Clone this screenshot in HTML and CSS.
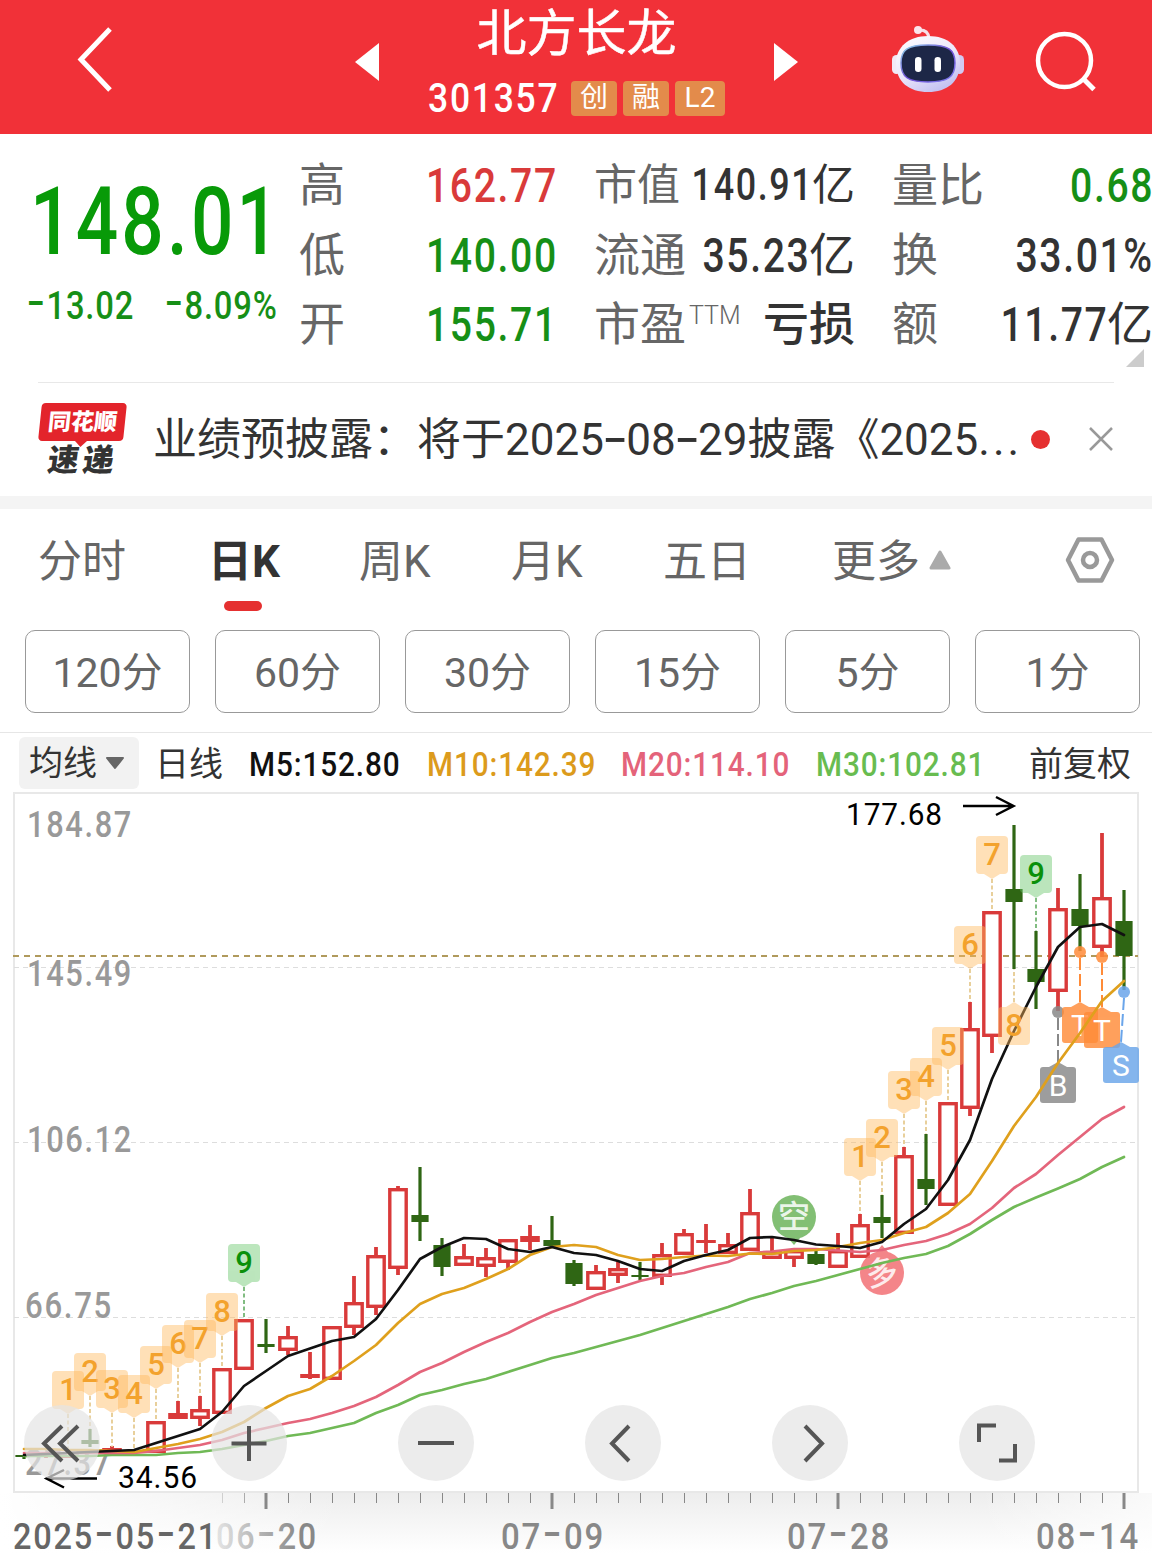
FILE: index.html
```html
<!DOCTYPE html>
<html lang="zh-CN">
<head>
<meta charset="utf-8">
<title>北方长龙 301357</title>
<link rel="stylesheet" href="styles.css">
</head>
<body>
<header class="topbar">
  <svg class="back" width="50" height="80" viewBox="70 20 50 80"><path d="M110 29 81 59.500 110 90" fill="none" stroke="#fff" stroke-width="5"/></svg>
  <svg class="prev" width="24" height="38" viewBox="0 0 24 38"><path d="M24 0V38L0 19Z" fill="#fff"/></svg>
  <div class="stock">
    <h1 class="name">北方长龙</h1>
    <div class="code-row"><span class="code">301357</span><span class="tag">创</span><span class="tag">融</span><span class="tag wide">L2</span></div>
  </div>
  <svg class="next" width="24" height="38" viewBox="0 0 24 38"><path d="M0 0V38L24 19Z" fill="#fff"/></svg>
  <svg class="robot" width="76" height="72" viewBox="890 24 76 72">
    <defs>
      <linearGradient id="shell" x1="0" y1="0" x2=".6" y2="1"><stop offset="0" stop-color="#fff"/><stop offset=".6" stop-color="#ebe6fa"/><stop offset="1" stop-color="#c5c2f2"/></linearGradient>
      <linearGradient id="rim" x1="0" y1="0" x2="1" y2="1"><stop offset="0" stop-color="#8fd7e8"/><stop offset=".5" stop-color="#7350d8"/><stop offset="1" stop-color="#7d7df0"/></linearGradient>
    </defs>
    <path d="M918 30Q928 29 929 38" fill="none" stroke="#f6dfe8" stroke-width="3"/>
    <circle cx="918" cy="30" r="4" fill="#fbe5ec"/>
    <rect x="892" y="55" width="9" height="19" rx="4.500" fill="#f2e9f6"/>
    <rect x="955" y="55" width="9" height="19" rx="4.500" fill="#d2c9f2"/>
    <path d="M928 36C948 36 960 47 960 63C960 82 947 92 928 92C909 92 896 82 896 63C896 47 909 36 928 36Z" fill="url(#shell)"/>
    <path d="M928 45C949 45 955 50 955 63C955 77 948 82 928 82C908 82 901 77 901 63C901 50 907 45 928 45Z" fill="#1d2747" stroke="url(#rim)" stroke-width="1.500"/>
    <rect x="915" y="57" width="6.500" height="15" rx="3.200" fill="#fff"/><rect x="934.500" y="57" width="6.500" height="15" rx="3.200" fill="#fff"/>
  </svg>
  <svg class="search" width="64" height="64" viewBox="1034 30 64 64"><circle cx="1064.500" cy="60.500" r="26.500" fill="none" stroke="#fff" stroke-width="4.500"/><path d="M1083.500 79 1094 89.500" stroke="#fff" stroke-width="5"/></svg>
</header>

<section class="quote">
  <div class="last">
    <div class="price">148.01</div>
    <div class="change"><span class="num"><i class="dash">-</i>13.02</span><span class="num"><i class="dash">-</i>8.09%</span></div>
  </div>
  <div class="stats">
    <div class="stat"><span class="label">高</span><span class="value up"><b>162.77</b></span></div>
    <div class="stat"><span class="label small">市值</span><span class="value small"><b>140.91</b>亿</span></div>
    <div class="stat"><span class="label">量比</span><span class="value down"><b>0.68</b></span></div>
    <div class="stat"><span class="label">低</span><span class="value down"><b>140.00</b></span></div>
    <div class="stat"><span class="label">流通</span><span class="value"><b>35.23</b>亿</span></div>
    <div class="stat"><span class="label">换</span><span class="value"><b>33.01%</b></span></div>
    <div class="stat"><span class="label">开</span><span class="value down"><b>155.71</b></span></div>
    <div class="stat"><span class="label">市盈<sup>TTM</sup></span><span class="value cjk">亏损</span></div>
    <div class="stat"><span class="label">额</span><span class="value"><b>11.77</b>亿</span></div>
  </div>
  <svg class="corner" width="18" height="18"><path d="M18 0V18H0Z" fill="#ccc"/></svg>
</section>

<section class="news">
  <div class="logo">
    <div class="logo-top"><span>同花顺</span></div>
    <div class="logo-bottom">速递</div>
  </div>
  <p class="headline">业绩预披露：将于2025<i class="dash">-</i>08<i class="dash">-</i>29披露《2025<span class="dots">...</span></p>
  <span class="dot"></span>
  <svg class="close" width="26" height="26" viewBox="0 0 26 26"><path d="M2 2 24 24M24 2 2 24" stroke="#999" stroke-width="2.500"/></svg>
</section>

<nav class="tabs">
  <span class="tab t1">分时</span><span class="tab t2 active">日K</span><span class="tab t3">周K</span><span class="tab t4">月K</span><span class="tab t5">五日</span><span class="tab t6">更多<svg width="22" height="20" viewBox="0 0 22 20"><path d="M11 2 20 18H2Z" fill="#aaa" stroke="#aaa" stroke-width="3" stroke-linejoin="round"/></svg></span>
  <svg class="settings" width="50" height="48" viewBox="1065 536 50 48"><path d="M1078.500 539.500H1101.500L1112 560 1101.500 580.500H1078.500L1068 560Z" fill="none" stroke="#999" stroke-width="4.500" stroke-linejoin="round"/><circle cx="1090" cy="560" r="7" fill="none" stroke="#999" stroke-width="4.500"/></svg>
</nav>
<div class="periods"><button>120分</button><button>60分</button><button>30分</button><button>15分</button><button>5分</button><button>1分</button></div>

<div class="legend">
  <span class="picker">均线<svg width="20" height="14" viewBox="0 0 20 14"><path d="M2 2H18L10 12Z" fill="#666" stroke="#666" stroke-width="2" stroke-linejoin="round"/></svg></span>
  <span class="cycle">日线</span>
  <span class="ma m5">M5:152.80</span><span class="ma m10">M10:142.39</span><span class="ma m20">M20:114.10</span><span class="ma m30">M30:102.81</span>
  <span class="adjust">前复权</span>
</div>

<main class="chart">
  <svg id="plot" width="1152" height="763" viewBox="0 790 1152 763"></svg>
  <div class="controls">
    <button><svg viewBox="0 0 76 76"><path d="M38 21 20 38.500 38 56M54 21 36 38.500 54 56"/></svg></button>
    <button><svg viewBox="0 0 76 76"><path d="M38 21V56M20.500 38.500H55.500"/></svg></button>
    <button><svg viewBox="0 0 76 76"><path d="M20 38H56"/></svg></button>
    <button><svg viewBox="0 0 76 76"><path d="M44 21 27 38.500 44 56"/></svg></button>
    <button><svg viewBox="0 0 76 76"><path d="M33 21 50 38.500 33 56"/></svg></button>
    <button><svg viewBox="0 0 76 76"><path d="M20 37V20.500H37M56 39V55.500H40"/></svg></button>
  </div>
</main>
<script src="chart.js"></script>
</body>
</html>
```
FILE: styles.css
```css
* { box-sizing: border-box; }
body { margin: 0; width: 1152px; height: 1553px; overflow: hidden; background: #fff; color: #333; font-family: Roboto, "Noto Sans CJK SC", sans-serif; white-space: nowrap; }
svg { display: block; flex: none; }
button { font: inherit; color: inherit; padding: 0; }
.dash { font-family: Inter, sans-serif; font-style: normal; font-weight: 400; font-size: 1.3em; line-height: 0; }

.topbar { height: 134px; background: #f13138; color: #fff; display: flex; align-items: flex-start; }
.back { margin: 20px 0 0 70px; }
.prev { margin: 43px 0 0 235px; }
.stock { width: 395px; display: flex; flex-direction: column; align-items: center; }
.name { margin: 0; font-size: 50px; line-height: 69px; font-weight: 400; -webkit-text-stroke: .5px #fff; height: 74px; }
.code-row { display: flex; align-items: center; gap: 6px; height: 48px; width: 297px; }
.code { width: 137px; font-size: 41px; font-weight: 500; letter-spacing: 2px; transform: scaleX(.865); transform-origin: left; }
.tag { width: 46px; height: 35px; border-radius: 4px; background: #e38b4b; font-size: 28px; line-height: 34px; text-align: center; }
.tag.wide { width: 50px; }
.next { margin-top: 43px; }
.robot { margin: 24px 0 0 92px; }
.search { margin: 30px 0 0 68px; }

.quote { position: relative; height: 248px; display: flex; }
.last { width: 300px; color: #089a08; }
.price { margin: 34px 0 0 30px; height: 108px; font-size: 94px; line-height: 108px; font-weight: 500; letter-spacing: 4px; transform: scaleX(.795); transform-origin: left; }
.change { display: flex; justify-content: space-between; padding: 7px 16px 0 26px; font-size: 39px; line-height: 46px; font-weight: 500; color: #168f16; }
.change .num { width: 110px; letter-spacing: 1px; transform: scaleX(.84); transform-origin: left; }
.change .num + .num { width: 120px; }
.stats { padding-top: 17px; display: grid; grid-template-columns: 255px 258px 258px; column-gap: 40px; grid-auto-rows: 69.500px; }
.stat { display: flex; align-items: center; }
.label { width: 46px; margin-left: -1px; font-size: 46px; line-height: 69px; color: #666; font-weight: 400; }
.label.small { font-size: 43px; }
.label sup { margin-left: 3px; font-size: 25px; font-weight: 300; line-height: 0; vertical-align: 16px; }
.value { flex: 1; min-width: 0; display: flex; justify-content: flex-end; margin-right: -2px; font-size: 46px; line-height: 69px; }
.value b { font-size: 48px; font-weight: 500; letter-spacing: 2px; transform: translateX(1px) scaleX(.815); transform-origin: right; }
.value.small { font-size: 43px; }
.value.small b { font-size: 44px; }
.value.cjk { font-weight: 500; }
.up { color: #d93a3a; }
.down { color: #168f16; }
.corner { position: absolute; right: 8px; bottom: 15px; }

.news { height: 127px; margin: 0; padding: 0 38px; display: flex; align-items: center; border-bottom: 13px solid #f4f4f4; position: relative; }
.news::before { content: ""; position: absolute; left: 38px; right: 38px; top: 0; height: 1px; background: #e8e8e8; }
.logo { width: 115px; height: 73px; }
.logo-top { width: 85px; height: 38px; margin-left: 2px; background: #e3242b; border-radius: 4px; transform: skewX(-6deg); color: #fff; font-size: 23px; line-height: 40px; font-weight: 900; text-align: center; position: relative; }
.logo-top::after { content: ""; position: absolute; left: 36px; top: 37px; border: 7px solid transparent; border-top-color: #e3242b; border-bottom: 0; }
.logo-bottom { margin-left: 10px; font-size: 31px; line-height: 40px; letter-spacing: 4px; font-weight: 900; transform: skewX(-8deg); }
.headline { margin: 0; width: 878px; font-size: 44px; line-height: 60px; padding-top: 2px; }
.headline .dash { display: inline-block; font-size: 1.1em; transform: scaleX(1.2); }
.dots { letter-spacing: 3px; }
.dot { width: 19px; height: 19px; border-radius: 50%; background: #e53030; }
.close { margin-left: 38px; }

.tabs { height: 121px; padding-left: 38px; display: flex; font-size: 44px; line-height: 102px; color: #666; font-weight: 400; }
.tab { display: flex; align-items: center; height: 102px; padding-top: 4px; position: relative; }
.t1 { width: 170px; } .t2 { width: 151px; } .t3 { width: 152px; } .t4 { width: 152px; } .t5 { width: 169px; } .t6 { width: 233px; gap: 9px; }
.t6 svg { margin-top: -4px; }
.tab.active { color: #333; font-weight: 700; }
.tab.active::after { content: ""; position: absolute; left: 16px; top: 92px; width: 38px; height: 10px; border-radius: 5px; background: #e53030; }
.settings { margin-top: 27px; }
.periods { display: grid; grid-template-columns: repeat(6, 165px); gap: 25px; padding: 0 0 0 25px; height: 102px; }
.periods button { height: 83px; padding-bottom: 6px; border: 1px solid #999; border-radius: 10px; background: #fff; color: #666; font-size: 41px; }

.legend { height: 58px; border-top: 1px solid #e6e6e6; padding: 4px 0 0 19px; display: flex; font-size: 34px; line-height: 54px; }
.picker { width: 120px; height: 52px; padding-left: 10px; background: #f2f2f2; border-radius: 6px; display: flex; align-items: center; gap: 8px; margin-right: 16px; }
.cycle { width: 94px; }
.ma { font-weight: 500; letter-spacing: 1px; transform: scaleX(.875); transform-origin: left; line-height: 54px; }
.m5 { width: 178px; color: #111; } .m10 { width: 194px; color: #dc9b1c; } .m20 { width: 195px; color: #e4637a; } .m30 { width: 213px; color: #68bc50; }

.chart { position: relative; height: 763px; }
.controls { position: absolute; left: 24px; top: 615px; display: flex; gap: 111px; }
.controls button { width: 76px; height: 76px; border: 0; border-radius: 50%; background: rgba(228, 228, 228, .7); }
.controls svg { width: 76px; height: 76px; fill: none; stroke: #555; stroke-width: 4; }
#plot text { font-family: Roboto, "Noto Sans CJK SC", sans-serif; }
#plot .axis { font-size: 37px; font-weight: 500; letter-spacing: 2px; fill: #999; }
#plot .date { font-size: 37px; font-weight: 500; letter-spacing: 2px; fill: #888; }
#plot .date .hyphen { font-family: Inter, sans-serif; font-size: 49px; font-weight: 400; }
#plot .first { fill: #666; }
#plot .extreme { font-size: 32px; letter-spacing: 1px; fill: #000; }
#plot .digit { font-size: 31px; font-weight: 500; text-anchor: middle; }
#plot .letter { font-size: 30px; fill: #fff; text-anchor: middle; }
#plot .signal { font-size: 32px; font-weight: 500; fill: #fff; fill-opacity: .85; text-anchor: middle; }
```
FILE: chart.js
```js
// One candle per trading day, 22px apart: [kind, high, bodyTop, bodyBottom, low]
// r = rising (hollow), f = rising with a tiny body, g = falling
const candles = [
  ['g',1455,1455,1457,1459],['f',1454,1455,1457,1458],['f',1455,1456,1458,1458],['g',1429,1440,1444,1447],
  ['f',1446,1448,1451,1451],['g',1450,1451,1453,1456],['r',1421,1421,1453,1453],['f',1401,1413,1419,1419],
  ['r',1396,1409,1419,1426],['r',1368,1368,1414,1414],['r',1319,1319,1370,1370],['g',1319,1344,1347,1353],
  ['r',1326,1336,1351,1355],['f',1352,1374,1378,1379],['r',1326,1326,1380,1380],['r',1276,1302,1328,1335],
  ['r',1247,1255,1308,1315],['r',1186,1188,1269,1275],['g',1167,1215,1222,1241],['g',1238,1245,1267,1276],
  ['r',1244,1256,1266,1266],['r',1248,1257,1267,1277],['r',1239,1239,1263,1270],['f',1225,1236,1242,1250],
  ['g',1216,1240,1246,1246],['g',1260,1263,1284,1286],['r',1265,1271,1290,1290],['r',1262,1268,1276,1283],
  ['g',1262,1275,1277,1280],['r',1243,1254,1277,1285],['r',1229,1233,1255,1255],['f',1224,1240,1243,1253],
  ['r',1233,1244,1254,1254],['r',1189,1212,1251,1251],['r',1237,1251,1259,1259],['r',1250,1250,1259,1267],
  ['g',1250,1254,1264,1265],['r',1233,1250,1268,1268],['r',1214,1224,1258,1258],['g',1195,1217,1223,1238],
  ['r',1147,1155,1234,1234],['g',1134,1179,1189,1205],['r',1102,1102,1206,1206],['r',1002,1028,1109,1116],
  ['r',911,911,1037,1053],['g',825,889,902,969],['g',931,969,982,1009],['r',888,908,992,1011],
  ['g',874,909,926,951],['r',833,897,948,957],['g',890,921,956,990]
];
const averages = {
  '#70b956': [1456,1456,1456,1456,1455,1455,1455,1453,1452,1449,1445,1441,1436,1433,1428,1423,1413,1405,1395,1390,1384,1379,1372,1365,1358,1353,1347,1341,1335,1328,1321,1314,1307,1299,1293,1286,1281,1275,1269,1263,1258,1254,1246,1234,1220,1207,1197.5,1188.5,1179,1167,1157],
  '#e4657b': [1453,1453,1453,1453,1453,1453,1451,1448,1445,1440,1433,1428,1423,1419,1413,1406,1397,1385,1372,1363,1352,1342,1333,1322,1312,1304,1295,1288,1281,1276,1273,1267,1262,1253,1251.5,1249,1249,1250.5,1252,1250,1245,1241,1234,1224,1208,1188,1174,1155,1137,1119,1107],
  '#dfa01d': [1449,1449,1450,1450,1451,1452,1448,1444,1439,1432,1422,1408,1396,1389,1376,1361,1345,1323,1304,1294,1288,1279,1269,1255,1247,1245,1247,1255,1260,1259,1257,1255.5,1256,1253.5,1254,1251,1250,1247,1243,1240,1233,1227,1213,1194,1161,1126,1097,1063,1033,1001,981],
  '#111': [1455,1454,1453,1452,1451,1450,1443,1436,1429,1412,1386,1371,1356,1348.5,1341,1337,1319,1290,1259,1247,1238,1239,1249,1252,1247,1253,1255,1261,1269,1271,1261,1255,1250,1238,1237,1240,1244.5,1246,1248,1242,1224,1209,1180,1140,1079,1031,987,947,927,924,935]
};
const X = i => 24 + 22 * i;
let s = `<defs>
<linearGradient id="v" x1="0" y1="0" x2="0" y2="1"><stop offset="0" stop-color="#ededed"/><stop offset="1" stop-color="#fff"/></linearGradient>
<linearGradient id="h"><stop offset="0" stop-color="#fff"/><stop offset=".3" stop-color="#fff" stop-opacity="0"/><stop offset=".85" stop-color="#fff" stop-opacity="0"/><stop offset="1" stop-color="#fff" stop-opacity=".7"/></linearGradient>
<linearGradient id="fade" gradientUnits="userSpaceOnUse" x1="205" y1="0" x2="300" y2="0"><stop offset="0" stop-color="#888" stop-opacity=".1"/><stop offset="1" stop-color="#888"/></linearGradient></defs>
<rect x="0" y="1493" width="1152" height="60" fill="url(#v)"/><rect x="0" y="1493" width="1152" height="60" fill="url(#h)"/>
<rect x="14" y="793" width="1124" height="699" fill="#fff" stroke="#e8e8e8" stroke-width="2"/>`;
for (const y of [967, 1142, 1317]) s += `<path d="M14 ${y}.5H1138" stroke="#ddd" stroke-width="1" stroke-dasharray="5 4"/>`;
s += '<path d="M13 956H1138" stroke="#b09a5c" stroke-width="2" stroke-dasharray="6 5"/>';
[['184.87',27,837,106],['145.49',27,986,106],['106.12',27,1152,106],['66.75',25,1318,88],['27.37',25,1475,87]].forEach(([t,x,y,w]) => {
  s += `<text class="axis" x="${x}" y="${y}" textLength="${w}" lengthAdjust="spacingAndGlyphs">${t}</text>`;
});
candles.forEach(([k,h,t,b,l], i) => {
  const x = X(i), c = k === 'g' ? '#2f6614' : '#d93a3a', w = k === 'g' ? 3.2 : 3.8;
  if (h < t) s += `<path d="M${x} ${h}V${t}" stroke="${c}" stroke-width="${w}"/>`;
  if (l > b) s += `<path d="M${x} ${b}V${l}" stroke="${c}" stroke-width="${w}"/>`;
  if (k === 'r') s += `<rect x="${x - 8.2}" y="${t + 1.7}" width="16.4" height="${b - t - 3.4}" fill="#fff" stroke="${c}" stroke-width="3.4"/>`;
  else { const r = k === 'g' ? 8.6 : 9.8; s += `<rect x="${x - r}" y="${t}" width="${2 * r}" height="${b - t}" fill="${c}"/>`; }
});
// trade tags: letter, centre, box top, colour, dot position
[['B',1058,1067,'#888',1058,1012],['T',1080,1007,'#ff8b38',1080,952],['T',1102,1012,'#ff8b38',1102,957],['S',1121,1047,'#6aa5ea',1124,992]].forEach(([t,x,y,c,dx,dy]) => {
  s += `<path d="M${dx} ${dy + 6}L${x} ${y - 5}" stroke="${c}" stroke-width="2" stroke-dasharray="12 4"/><circle cx="${dx}" cy="${dy}" r="6" fill="${c}" fill-opacity=".85"/>
  <g fill="${c}" opacity=".82"><rect x="${x - 18}" y="${y}" width="36" height="36" rx="3"/><path d="M${x - 9} ${y}L${x} ${y - 5} ${x + 9} ${y}Z"/></g><text class="letter" x="${x}" y="${y + 29}">${t}</text>`;
});
[['空',794,1217,'#6db45c',1],['多',882,1273,'#f27074',-1]].forEach(([t,x,y,c,d]) => {
  s += `<g fill="${c}" opacity=".85"><circle cx="${x}" cy="${y}" r="22"/><path d="M${x - 6} ${y + d * 21}H${x + 6}L${x} ${y + d * 28}Z"/></g><text class="signal" x="${x}" y="${y + 11}"${d < 0 ? ` transform="rotate(-12 ${x} ${y})"` : ''}>${t}</text>`;
});
for (const c in averages) s += `<polyline points="${averages[c].map((y, i) => X(i) + ',' + y).join(' ')}" fill="none" stroke="${c}" stroke-width="2.7" stroke-linejoin="round" stroke-linecap="round"/>`;
// sequence marks: digit, x, box top, end of the leader line
[[1,68,1371,1455],[2,90,1353,1429],[3,112,1370,1447],[4,134,1375,1450],[5,156,1346,1421],[6,178,1325,1401],[7,200,1320,1396],[8,222,1293,1368],[9,244,1244,1319],
 [1,860,1138,1214],[2,882,1119,1195],[3,904,1071,1147],[4,926,1058,1134],[5,948,1027,1102],[6,970,926,1002],[7,992,836,911],[8,1014,1007,969],[9,1036,855,931]].forEach(([n,x,y,e]) => {
  const green = n === 9, below = e < y, c = green ? '#66c568' : '#ffb95c';
  const tip = below ? y - 5 : y + 43, edge = below ? y : y + 38;
  s += `<path d="M${x} ${tip}V${e}" stroke="${green ? '#74b574' : '#e6cb91'}" stroke-width="1.8" stroke-dasharray="4 2.500"/>
  <g fill="${c}" opacity=".44"><rect x="${x - 16}" y="${y}" width="32" height="38" rx="4"/><path d="M${x - 8} ${edge}H${x + 8}L${x} ${tip}Z"/></g>
  <text class="digit" x="${x}" y="${y + 29}" fill="${green ? '#0a900a' : '#f3a22d'}">${n}</text>`;
});
s += `<text class="extreme" x="846" y="825" textLength="97" lengthAdjust="spacingAndGlyphs">177.68</text><path d="M963 806H1013M996 797 1013.500 806 996 815" fill="none" stroke="#000" stroke-width="2.500"/>
<text class="extreme" x="118" y="1488" textLength="80" lengthAdjust="spacingAndGlyphs">34.56</text><path d="M97 1478.500H47M64 1470 46.500 1478.500 64 1487.500" fill="none" stroke="#000" stroke-width="2.500"/>`;
for (let x = 222; x <= 1124; x += 22) {
  const major = (x - 266) % 286 === 0;
  s += `<path d="M${x}${major ? '' : '.5'} 1493v${major ? 16 : 10}" stroke="#888" stroke-width="${major ? 3 : 1}" opacity="${x < 266 ? (x - 200) / 66 : 1}"/>`;
}
[['2025-05-21',13,205,'first'],['06-20',216,102,'faded'],['07-09',501,104,''],['07-28',787,104,''],['08-14',1036,104,'']].forEach(([t,x,w,c]) => {
  s += `<text class="date ${c}" x="${x}" y="1549" textLength="${w}" lengthAdjust="spacingAndGlyphs"${c === 'faded' ? ' style="fill:url(#fade)"' : ''}>${t.replace(/-/g, '<tspan class="hyphen">-</tspan>')}</text>`;
});
document.getElementById('plot').innerHTML = s;
```
